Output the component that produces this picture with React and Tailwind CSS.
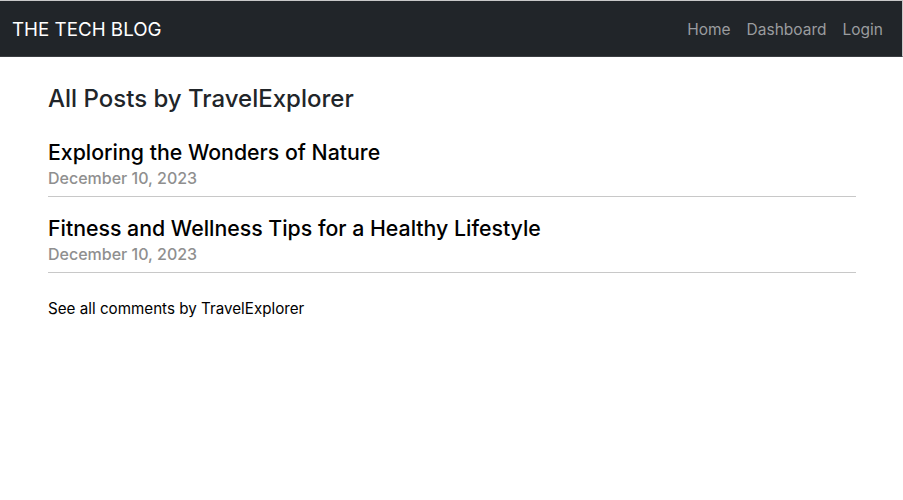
export default function App() {
  const posts = [
    { title: "Exploring the Wonders of Nature", date: "December 10, 2023" },
    { title: "Fitness and Wellness Tips for a Healthy Lifestyle", date: "December 10, 2023" },
  ];
  return (
    <div className="min-h-[500px] bg-white border-t border-[#c8c8c8] text-[#212529]" style={{ fontFamily: "Inter, 'Noto Sans', sans-serif" }}>
      <nav className="h-[56px] bg-[#212529] border-b border-r border-b-[#3a3d41] border-r-[#c8c8c8] flex items-center justify-between pl-3 pr-[19px] pt-[3px]">
        <span className="text-white text-[18.75px] leading-none">THE TECH BLOG</span>
        <div className="flex gap-4 text-[15.5px] text-[#9a9c9f]">
          <span>Home</span>
          <span>Dashboard</span>
          <span>Login</span>
        </div>
      </nav>
      <main className="ml-12 mr-[47px] pt-[27px]">
        <h2 className="text-[24px] leading-[30px] font-medium mb-[24px]">All Posts by TravelExplorer</h2>
        {posts.map((p) => (
          <div key={p.title} className="border-b border-[#c8c8c8] pb-[7px] mb-[17px]">
            <h4 className="text-[21.3px] leading-[29px] font-medium text-black">{p.title}</h4>
            <p className="text-[16px] leading-[22px] font-medium text-[#8f8f8f]">{p.date}</p>
          </div>
        ))}
        <p className="text-[15.2px] leading-[24px] text-black pt-[7px]">See all comments by TravelExplorer</p>
      </main>
    </div>
  );
}
